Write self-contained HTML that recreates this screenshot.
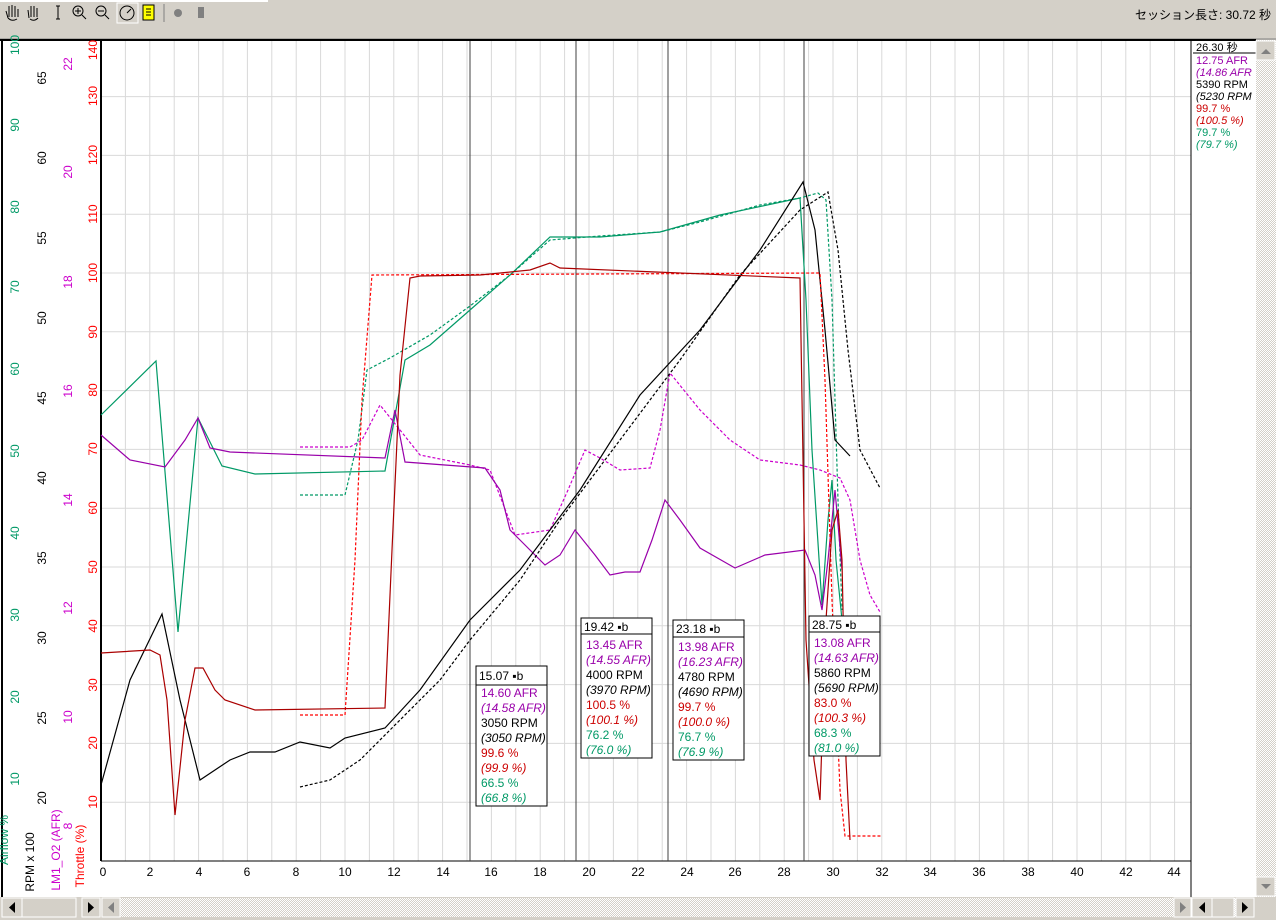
<!DOCTYPE html>
<html><head><meta charset="utf-8"><style>
html,body{margin:0;padding:0;background:#d4d0c8;}
svg{display:block;font-family:"Liberation Sans","Noto Sans CJK JP",sans-serif;}
</style></head><body>
<svg width="1276" height="920" viewBox="0 0 1276 920" xmlns="http://www.w3.org/2000/svg">
<defs>
<pattern id="hatch" width="2" height="2" patternUnits="userSpaceOnUse"><rect width="2" height="2" fill="#d4d0c8"/><rect width="1" height="1" fill="#fff"/><rect x="1" y="1" width="1" height="1" fill="#fff"/></pattern>
</defs>
<rect width="1276" height="920" fill="#d4d0c8"/>
<rect x="0" y="0" width="268" height="2" fill="#fff"/>
<!-- toolbar icons -->
<g stroke="#000" fill="none" stroke-width="1">
<path d="M8 18 L6 11 M9 17 V6 M12 17 V5 M15 17 V6 M18 17 V9 M8 18 Q12 22 17 19"/>
<path d="M29 18 L28 10 M31 17 V6 M34 17 V6 M37 17 V8 M30 19 Q34 22 38 18"/>
<path d="M56 6 H60 M58 6 V19 M56 19 H60"/>
<circle cx="78" cy="11" r="5"/><path d="M82 15 L86 19 M75 11 H81 M78 8 V14"/>
<circle cx="101" cy="11" r="5"/><path d="M105 15 L109 19 M98 11 H104"/>
<circle cx="127" cy="13" r="7"/><path d="M127 13 L131 9"/>
</g>
<rect x="117" y="3" width="21" height="20" fill="none" stroke="#fff"/>
<rect x="143" y="5" width="11" height="15" fill="#ffff00" stroke="#000"/>
<path d="M146 9 H151 M146 12 H151 M146 15 H151" stroke="#000"/>
<line x1="164" y1="4" x2="164" y2="22" stroke="#808080"/>
<circle cx="178" cy="13" r="4" fill="#808080"/>
<rect x="198" y="7" width="6" height="11" fill="#808080"/>
<text x="1135" y="19" font-size="12" fill="#000">セッション長さ: 30.72 秒</text>
<line x1="0" y1="39" x2="1276" y2="39" stroke="#808080"/>
<!-- main white areas -->
<rect x="0" y="40" width="1256" height="857" fill="#fff"/>
<line x1="0" y1="40" x2="1256" y2="40" stroke="#000" stroke-width="2"/>
<line x1="2" y1="40" x2="2" y2="897" stroke="#000" stroke-width="2"/>
<!-- grid -->
<g stroke="#d9d9d9" stroke-width="1">
<path d="M125.4 41V861 M149.8 41V861 M174.2 41V861 M198.6 41V861 M223 41V861 M247.4 41V861 M271.8 41V861 M296.2 41V861 M320.6 41V861 M345 41V861 M369.4 41V861 M393.8 41V861 M418.2 41V861 M442.6 41V861 M467 41V861 M491.4 41V861 M515.8 41V861 M540.2 41V861 M564.6 41V861 M589 41V861 M613.4 41V861 M637.8 41V861 M662.2 41V861 M686.6 41V861 M711 41V861 M735.4 41V861 M759.8 41V861 M784.2 41V861 M808.6 41V861 M833 41V861 M857.4 41V861 M881.8 41V861 M906.2 41V861 M930.6 41V861 M955 41V861 M979.4 41V861 M1003.8 41V861 M1028.2 41V861 M1052.6 41V861 M1077 41V861 M1101.4 41V861 M1125.8 41V861 M1150.2 41V861 M1174.6 41V861"/>
<path d="M101 802.2H1191 M101 743.4H1191 M101 684.6H1191 M101 625.8H1191 M101 567H1191 M101 508.2H1191 M101 449.4H1191 M101 390.6H1191 M101 331.8H1191 M101 273H1191 M101 214.2H1191 M101 155.4H1191 M101 96.6H1191"/>
</g>
<line x1="101" y1="41" x2="101" y2="861" stroke="#000" stroke-width="2"/>
<line x1="101" y1="861" x2="1191" y2="861" stroke="#000"/>
<line x1="1191" y1="40" x2="1191" y2="897" stroke="#000"/>
<!-- x labels -->
<g font-size="12" fill="#000" text-anchor="middle">
<text x="103" y="876">0</text><text x="150" y="876">2</text><text x="199" y="876">4</text><text x="247" y="876">6</text><text x="296" y="876">8</text><text x="345" y="876">10</text><text x="394" y="876">12</text><text x="443" y="876">14</text><text x="491" y="876">16</text><text x="540" y="876">18</text><text x="589" y="876">20</text><text x="638" y="876">22</text><text x="687" y="876">24</text><text x="735" y="876">26</text><text x="784" y="876">28</text><text x="833" y="876">30</text><text x="882" y="876">32</text><text x="930" y="876">34</text><text x="979" y="876">36</text><text x="1028" y="876">38</text><text x="1077" y="876">40</text><text x="1126" y="876">42</text><text x="1174" y="876">44</text>
</g>
<!-- left axis labels (rotated) -->
<g font-size="12" text-anchor="middle">
<g fill="#009966">
<text transform="translate(19,45) rotate(-90)">100</text><text transform="translate(19,125) rotate(-90)">90</text><text transform="translate(19,207) rotate(-90)">80</text><text transform="translate(19,287) rotate(-90)">70</text><text transform="translate(19,369) rotate(-90)">60</text><text transform="translate(19,451) rotate(-90)">50</text><text transform="translate(19,533) rotate(-90)">40</text><text transform="translate(19,615) rotate(-90)">30</text><text transform="translate(19,697) rotate(-90)">20</text><text transform="translate(19,779) rotate(-90)">10</text>
<text transform="translate(8,840) rotate(-90)">Airflow %</text>
</g>
<g fill="#000">
<text transform="translate(46,78) rotate(-90)">65</text><text transform="translate(46,158) rotate(-90)">60</text><text transform="translate(46,238) rotate(-90)">55</text><text transform="translate(46,318) rotate(-90)">50</text><text transform="translate(46,398) rotate(-90)">45</text><text transform="translate(46,478) rotate(-90)">40</text><text transform="translate(46,558) rotate(-90)">35</text><text transform="translate(46,638) rotate(-90)">30</text><text transform="translate(46,718) rotate(-90)">25</text><text transform="translate(46,798) rotate(-90)">20</text>
<text transform="translate(34,862) rotate(-90)">RPM x 100</text>
</g>
<g fill="#cc00cc">
<text transform="translate(72,64) rotate(-90)">22</text><text transform="translate(72,172) rotate(-90)">20</text><text transform="translate(72,282) rotate(-90)">18</text><text transform="translate(72,391) rotate(-90)">16</text><text transform="translate(72,500) rotate(-90)">14</text><text transform="translate(72,608) rotate(-90)">12</text><text transform="translate(72,717) rotate(-90)">10</text><text transform="translate(72,826) rotate(-90)">8</text>
<text transform="translate(60,850) rotate(-90)">LM1_O2 (AFR)</text>
</g>
<g fill="#ff0000">
<text transform="translate(97,50) rotate(-90)">140</text><text transform="translate(97,96) rotate(-90)">130</text><text transform="translate(97,155) rotate(-90)">120</text><text transform="translate(97,214) rotate(-90)">110</text><text transform="translate(97,273) rotate(-90)">100</text><text transform="translate(97,332) rotate(-90)">90</text><text transform="translate(97,390) rotate(-90)">80</text><text transform="translate(97,449) rotate(-90)">70</text><text transform="translate(97,508) rotate(-90)">60</text><text transform="translate(97,567) rotate(-90)">50</text><text transform="translate(97,626) rotate(-90)">40</text><text transform="translate(97,685) rotate(-90)">30</text><text transform="translate(97,743) rotate(-90)">20</text><text transform="translate(97,802) rotate(-90)">10</text>
<text transform="translate(84,856) rotate(-90)">Throttle (%)</text>
</g>
</g>
<!-- markers -->
<g stroke="#404040" stroke-width="1">
<line x1="470" y1="41" x2="470" y2="861"/><line x1="576" y1="41" x2="576" y2="861"/><line x1="668" y1="41" x2="668" y2="861"/><line x1="804" y1="41" x2="804" y2="861"/>
</g>
<!-- curves -->
<g fill="none" stroke-width="1.2">
<polyline stroke="#009966" stroke-dasharray="3,2" points="300,495 345,495 358,440 367,370 390,358 430,335 470,306 510,275 550,240 600,236 660,232 700,222 760,205 800,198 818,193 826,200 832,300 838,500 842,610"/>
<polyline stroke="#009966" points="101,415 156,361 178,632 198,418 222,466 255,474 385,471 405,360 430,345 470,310 510,275 550,237 600,237 660,232 720,215 800,198 806,300 812,450 822,605 828,520 832,480 836,560 842,620"/>
<polyline stroke="#cc00cc" stroke-dasharray="3,2" points="300,447 350,447 362,440 380,405 400,430 420,455 470,465 490,470 515,535 550,530 568,490 585,450 600,458 620,470 650,468 660,430 670,373 700,410 730,440 760,460 800,465 820,470 840,478 850,500 860,560 870,595 880,612"/>
<polyline stroke="#9900aa" points="101,435 130,460 165,467 185,440 198,418 210,448 230,452 385,458 395,410 405,462 485,468 500,490 510,530 545,565 560,555 575,530 595,555 610,575 625,572 640,572 652,540 665,500 680,520 700,548 735,568 765,555 805,550 815,575 822,610 828,560 835,490 842,570"/>
<polyline stroke="#000" stroke-dasharray="3,2" points="300,787 330,780 360,760 400,720 440,680 470,640 520,580 560,520 620,440 680,360 740,275 800,210 828,192 838,250 848,350 860,450 880,488"/>
<polyline stroke="#000" points="101,785 130,680 162,614 180,700 200,780 230,760 250,752 275,752 300,742 330,748 345,738 385,728 420,690 470,620 520,570 580,490 640,395 700,330 760,250 803,182 815,230 825,330 835,440 850,456"/>
<polyline stroke="#ff0000" stroke-dasharray="3,2" points="300,715 345,715 355,560 362,400 372,275 820,273 825,380 832,600 840,790 845,836 882,836"/>
<polyline stroke="#aa0000" points="101,653 150,650 160,655 167,700 175,815 185,720 195,668 203,668 215,690 225,700 255,710 385,708 392,550 400,375 410,278 420,276 480,275 530,270 550,263 560,268 800,278 806,640 814,760 820,800 826,620 832,530 838,510 842,560 846,760 850,840"/>
</g>
<!-- info boxes -->
<g font-size="12">
<g>
<rect x="476" y="666" width="71" height="140" fill="#fff" stroke="#000"/><line x1="476" y1="685" x2="547" y2="685" stroke="#000"/>
<text x="479" y="680" fill="#000">15.07 ▪b</text>
<text x="481" y="697" fill="#9900aa">14.60 AFR</text><text x="481" y="712" fill="#9900aa" font-style="italic">(14.58 AFR)</text>
<text x="481" y="727" fill="#000">3050 RPM</text><text x="481" y="742" fill="#000" font-style="italic">(3050 RPM)</text>
<text x="481" y="757" fill="#cc0000">99.6 %</text><text x="481" y="772" fill="#cc0000" font-style="italic">(99.9 %)</text>
<text x="481" y="787" fill="#009966">66.5 %</text><text x="481" y="802" fill="#009966" font-style="italic">(66.8 %)</text>
</g>
<g>
<rect x="581" y="618" width="71" height="140" fill="#fff" stroke="#000"/><line x1="581" y1="634" x2="652" y2="634" stroke="#000"/>
<text x="584" y="631" fill="#000">19.42 ▪b</text>
<text x="586" y="649" fill="#9900aa">13.45 AFR</text><text x="586" y="664" fill="#9900aa" font-style="italic">(14.55 AFR)</text>
<text x="586" y="679" fill="#000">4000 RPM</text><text x="586" y="694" fill="#000" font-style="italic">(3970 RPM)</text>
<text x="586" y="709" fill="#cc0000">100.5 %</text><text x="586" y="724" fill="#cc0000" font-style="italic">(100.1 %)</text>
<text x="586" y="739" fill="#009966">76.2 %</text><text x="586" y="754" fill="#009966" font-style="italic">(76.0 %)</text>
</g>
<g>
<rect x="673" y="620" width="71" height="140" fill="#fff" stroke="#000"/><line x1="673" y1="637" x2="744" y2="637" stroke="#000"/>
<text x="676" y="633" fill="#000">23.18 ▪b</text>
<text x="678" y="651" fill="#9900aa">13.98 AFR</text><text x="678" y="666" fill="#9900aa" font-style="italic">(16.23 AFR)</text>
<text x="678" y="681" fill="#000">4780 RPM</text><text x="678" y="696" fill="#000" font-style="italic">(4690 RPM)</text>
<text x="678" y="711" fill="#cc0000">99.7 %</text><text x="678" y="726" fill="#cc0000" font-style="italic">(100.0 %)</text>
<text x="678" y="741" fill="#009966">76.7 %</text><text x="678" y="756" fill="#009966" font-style="italic">(76.9 %)</text>
</g>
<g>
<rect x="809" y="616" width="71" height="140" fill="#fff" stroke="#000"/><line x1="809" y1="632" x2="880" y2="632" stroke="#000"/>
<text x="812" y="629" fill="#000">28.75 ▪b</text>
<text x="814" y="647" fill="#9900aa">13.08 AFR</text><text x="814" y="662" fill="#9900aa" font-style="italic">(14.63 AFR)</text>
<text x="814" y="677" fill="#000">5860 RPM</text><text x="814" y="692" fill="#000" font-style="italic">(5690 RPM)</text>
<text x="814" y="707" fill="#cc0000">83.0 %</text><text x="814" y="722" fill="#cc0000" font-style="italic">(100.3 %)</text>
<text x="814" y="737" fill="#009966">68.3 %</text><text x="814" y="752" fill="#009966" font-style="italic">(81.0 %)</text>
</g>
</g>
<!-- right panel -->
<g font-size="11">
<text x="1196" y="51" fill="#000">26.30 秒</text><line x1="1193" y1="53" x2="1256" y2="53" stroke="#000"/>
<text x="1196" y="64" fill="#9900aa">12.75 AFR</text><text x="1196" y="76" fill="#9900aa" font-style="italic">(14.86 AFR</text>
<text x="1196" y="88" fill="#000">5390 RPM</text><text x="1196" y="100" fill="#000" font-style="italic">(5230 RPM</text>
<text x="1196" y="112" fill="#cc0000">99.7 %</text><text x="1196" y="124" fill="#cc0000" font-style="italic">(100.5 %)</text>
<text x="1196" y="136" fill="#009966">79.7 %</text><text x="1196" y="148" fill="#009966" font-style="italic">(79.7 %)</text>
</g>
<!-- vertical scrollbar -->
<rect x="1256" y="40" width="20" height="857" fill="url(#hatch)"/>
<rect x="1256" y="41" width="19" height="19" fill="#d4d0c8" stroke="#fff"/><path d="M1261 54 L1266 49 L1271 54Z" fill="#808080"/>
<rect x="1256" y="877" width="19" height="19" fill="#d4d0c8" stroke="#fff"/><path d="M1261 884 L1266 889 L1271 884Z" fill="#808080"/>
<!-- bottom scrollbars -->
<rect x="0" y="897" width="1276" height="23" fill="#d4d0c8"/>
<rect x="102" y="898" width="1152" height="19" fill="url(#hatch)"/>
<rect x="2" y="898" width="20" height="19" fill="#d4d0c8" stroke="#fff"/><path d="M15 902 L9 907.5 L15 913Z" fill="#000"/>
<rect x="22" y="898" width="54" height="19" fill="#d4d0c8" stroke="#fff"/>
<rect x="82" y="898" width="18" height="19" fill="#d4d0c8" stroke="#fff"/><path d="M88 902 L94 907.5 L88 913Z" fill="#000"/>
<rect x="102" y="898" width="18" height="19" fill="#d4d0c8" stroke="#fff"/><path d="M114 902 L108 907.5 L114 913Z" fill="#808080"/>
<rect x="1174" y="898" width="17" height="19" fill="#d4d0c8" stroke="#fff"/><path d="M1180 902 L1186 907.5 L1180 913Z" fill="#808080"/>
<rect x="1192" y="898" width="20" height="19" fill="#d4d0c8" stroke="#fff"/><path d="M1205 902 L1199 907.5 L1205 913Z" fill="#000"/>
<rect x="1212" y="898" width="22" height="19" fill="#d4d0c8" stroke="#fff"/>
<rect x="1236" y="898" width="18" height="19" fill="#d4d0c8" stroke="#fff"/><path d="M1242 902 L1248 907.5 L1242 913Z" fill="#000"/>
</svg>
</body></html>
